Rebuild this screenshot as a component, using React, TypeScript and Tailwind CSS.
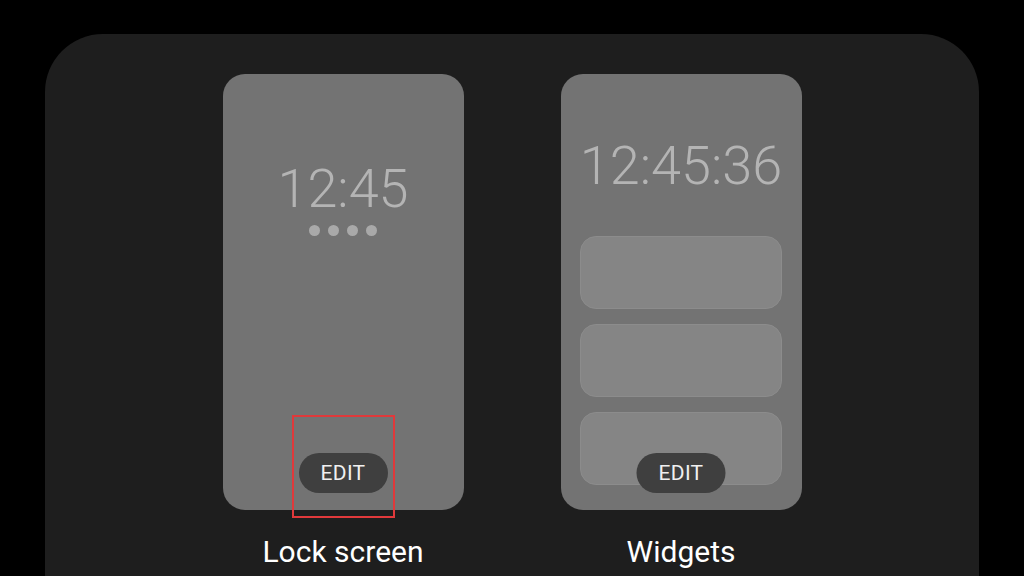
import React from "react";

const font = { fontFamily: "Roboto, 'Noto Sans', sans-serif" };

function EditPill() {
  return (
    <div className="flex h-[40px] w-[89px] items-center justify-center rounded-full bg-[#3f3f3f] text-[21px] leading-none tracking-[0.3px] text-[#f0f0f0]">
      EDIT
    </div>
  );
}

function LockScreenPreview() {
  return (
    <div className="relative flex h-[436px] w-[241px] flex-col items-center rounded-[22px] bg-[#737373]">
      <div className="mt-[88px] text-[54px] font-light leading-none text-[#b4b4b4]">12:45</div>
      <div className="mt-[9px] flex gap-[8px]">
        {[0, 1, 2, 3].map((i) => (
          <span key={i} className="h-[11px] w-[11px] rounded-full bg-[#a9a9a9]" />
        ))}
      </div>
      <div className="mt-auto mb-[17px]">
        <EditPill />
      </div>
      {/* highlight frame around the edit button */}
      <div className="absolute left-[69px] top-[341px] h-[103px] w-[103px] border-2 border-[#e0393b]" />
    </div>
  );
}

function WidgetsPreview() {
  return (
    <div className="relative flex h-[436px] w-[241px] flex-col items-center overflow-hidden rounded-[22px] bg-[#737373]">
      <div className="mt-[65px] text-[54px] font-light leading-none text-[#b4b4b4]">12:45:36</div>
      <div className="mt-[43px] flex w-[202px] flex-col gap-[15px]">
        {[0, 1, 2].map((i) => (
          <div
            key={i}
            className="h-[73px] rounded-[16px] border border-[#8c8c8c] bg-[#858585]"
          />
        ))}
      </div>
      <div className="absolute bottom-[17px] left-1/2 -translate-x-1/2">
        <EditPill />
      </div>
    </div>
  );
}

export default function App() {
  return (
    <div className="h-[576px] w-[1024px] overflow-hidden bg-black pt-[34px] pl-[45px]" style={font}>
      <div className="h-[620px] w-[934px] rounded-[58px] bg-[#1e1e1e] pt-[40px]">
        <div className="flex justify-center gap-[97px]">
          <div className="flex flex-col items-center">
            <LockScreenPreview />
            <div className="mt-[27px] text-[30px] leading-none text-white">Lock screen</div>
          </div>
          <div className="flex flex-col items-center">
            <WidgetsPreview />
            <div className="mt-[27px] text-[30px] leading-none text-white">Widgets</div>
          </div>
        </div>
      </div>
    </div>
  );
}
